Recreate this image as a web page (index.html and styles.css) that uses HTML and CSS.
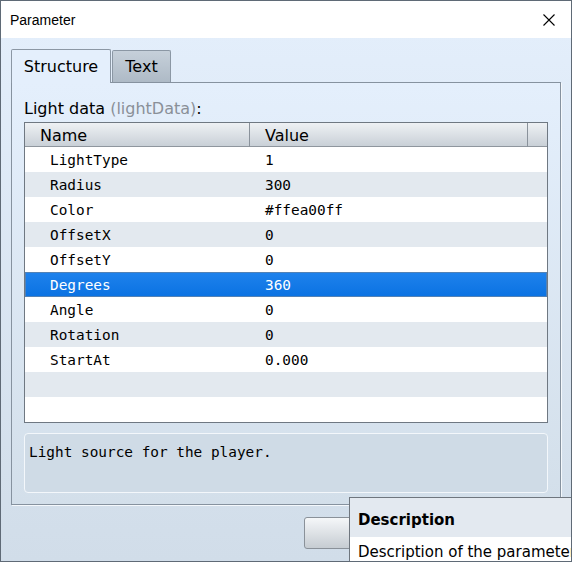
FILE: index.html
```html
<!DOCTYPE html>
<html>
<head>
<meta charset="utf-8">
<link rel="stylesheet" href="styles.css">
</head>
<body>
<div class="window">
  <div class="titlebar">
    <span class="title">Parameter</span>
    <span class="close"><svg width="12" height="12" viewBox="0 0 12 12"><path d="M0.5 0.5 L11.5 11.5 M11.5 0.5 L0.5 11.5" stroke="#000" stroke-width="1.1" fill="none"/></svg></span>
  </div>
  <div class="client">
    <div class="tabs">
      <div class="tab active">Structure</div>
      <div class="tab">Text</div>
    </div>
    <div class="panel">
      <div class="label">Light data <span class="muted">(lightData)</span>:</div>
      <div class="table">
        <div class="thead">
          <div class="th th-name">Name</div>
          <div class="th th-value">Value</div>
          <div class="th th-rest"></div>
        </div>
        <div class="tbody">
          <div class="row"><span class="c-name">LightType</span><span class="c-val">1</span></div>
          <div class="row alt"><span class="c-name">Radius</span><span class="c-val">300</span></div>
          <div class="row"><span class="c-name">Color</span><span class="c-val">#ffea00ff</span></div>
          <div class="row alt"><span class="c-name">OffsetX</span><span class="c-val">0</span></div>
          <div class="row"><span class="c-name">OffsetY</span><span class="c-val">0</span></div>
          <div class="row selected"><span class="c-name">Degrees</span><span class="c-val">360</span></div>
          <div class="row"><span class="c-name">Angle</span><span class="c-val">0</span></div>
          <div class="row alt"><span class="c-name">Rotation</span><span class="c-val">0</span></div>
          <div class="row"><span class="c-name">StartAt</span><span class="c-val">0.000</span></div>
          <div class="row alt"><span class="c-name"></span><span class="c-val"></span></div>
        </div>
      </div>
      <div class="desc">Light source for the player.</div>
    </div>
    <div class="buttons">
      <div class="btn btn-ok" title="OK"></div>
      <div class="btn btn-cancel" title="Cancel"></div>
    </div>
  </div>
  <div class="tooltip">
    <div class="tip-head">Description</div>
    <div class="tip-body">Description of the parameter.</div>
  </div>
</div>
</body>
</html>
```

FILE: styles.css
```css
html, body {
  margin: 0;
  padding: 0;
  overflow: hidden;
}

.window {
  position: relative;
  width: 572px;
  height: 562px;
  box-sizing: border-box;
  border: 1px solid #5f6a76;
  background: linear-gradient(#e4effc, #d1dde9);
  display: flex;
  flex-direction: column;
  overflow: hidden;
}

.titlebar {
  height: 37px;
  background: #ffffff;
  display: flex;
  align-items: center;
  justify-content: space-between;
  padding: 0 16px 0 9px;
}

.title {
  font-family: "Liberation Sans", Arial, sans-serif;
  font-size: 14px;
  color: #000;
}

.close {
  display: flex;
  width: 12px;
  height: 12px;
}

.client {
  flex: 1;
  padding: 11px 10px 0 10px;
  display: flex;
  flex-direction: column;
}

.tabs {
  height: 33px;
  display: flex;
  align-items: flex-end;
  gap: 1px;
  font-family: "DejaVu Sans", sans-serif;
  font-size: 16px;
  color: #000;
  position: relative;
  z-index: 2;
}

.tab {
  box-sizing: border-box;
  height: 32px;
  border: 1px solid #8b97a4;
  border-bottom: none;
  display: flex;
  align-items: center;
  justify-content: center;
  width: 59px;
  background: linear-gradient(#c6d0da, #aebac6);
  border-radius: 2px 2px 0 0;
}

.tab.active {
  width: 100px;
  height: 34px;
  margin-bottom: -1px;
  background: #e4effc;
}

.panel {
  box-sizing: border-box;
  height: 423px;
  border: 1px solid #86929f;
  box-shadow: 1px 1px 0 #f4f8fc;
  background: linear-gradient(#e4effc, #d3dfea);
  padding: 16px 12px 0 12px;
  display: flex;
  flex-direction: column;
}

.label {
  font-family: "DejaVu Sans", sans-serif;
  font-size: 16px;
  line-height: 19px;
  color: #000;
  margin-bottom: 4px;
}

.muted {
  color: #8a9098;
}

.table {
  box-sizing: border-box;
  height: 301px;
  border: 1px solid #6f7882;
  background: #ffffff;
  display: flex;
  flex-direction: column;
}

.thead {
  display: grid;
  grid-template-columns: 225px 278px 1fr;
  height: 24px;
  box-sizing: border-box;
  border-bottom: 1px solid #8f969e;
  background: linear-gradient(#eef1f4, #c9d0d7);
  font-family: "DejaVu Sans", sans-serif;
  font-size: 16px;
  color: #000;
}

.th {
  box-sizing: border-box;
  display: flex;
  align-items: center;
  padding-left: 15px;
  padding-top: 1px;
  border-right: 1px solid #8a929b;
  line-height: 23px;
}

.th-rest {
  border-right: none;
}

.tbody {
  display: flex;
  flex-direction: column;
}

.row {
  display: grid;
  grid-template-columns: 225px 1fr;
  height: 25px;
  box-sizing: border-box;
  font-family: "DejaVu Sans Mono", monospace;
  font-size: 14.4px;
  line-height: 26px;
  color: #000;
}

.row.alt {
  background: #e3e9ef;
}

.row.selected {
  background: linear-gradient(#1f82ec, #0a72e2);
  color: #ffffff;
  box-shadow: inset 0 0 0 1px #5282b6;
}

.c-name {
  padding-left: 25px;
}

.c-val {
  padding-left: 15px;
}

.desc {
  box-sizing: border-box;
  margin-top: 10px;
  height: 60px;
  border: 1px solid #f3f7fb;
  border-radius: 4px;
  background: #cfdbe6;
  padding: 9px 4px;
  font-family: "DejaVu Sans Mono", monospace;
  font-size: 14.4px;
  line-height: 19px;
  color: #000;
}

.buttons {
  margin-top: 12px;
  display: flex;
  justify-content: flex-end;
  gap: 8px;
}

.btn {
  box-sizing: border-box;
  height: 32px;
  border: 1px solid #8a9199;
  border-radius: 3px;
  background: linear-gradient(#f5f7f9, #c6ccd2);
}

.btn-ok {
  width: 129px;
}

.btn-cancel {
  width: 120px;
}

.tooltip {
  position: absolute;
  left: 348px;
  top: 496px;
  width: 260px;
  height: 120px;
  border: 1px solid #6f767e;
  background: #ffffff;
  font-family: "DejaVu Sans", sans-serif;
  font-size: 15px;
  color: #000;
}

.tip-head {
  height: 39px;
  background: #e3e9f0;
  font-weight: bold;
  padding-left: 8px;
  display: flex;
  align-items: center;
  padding-top: 4px;
  box-sizing: border-box;
}

.tip-body {
  padding-left: 8px;
  line-height: 31px;
}
```
